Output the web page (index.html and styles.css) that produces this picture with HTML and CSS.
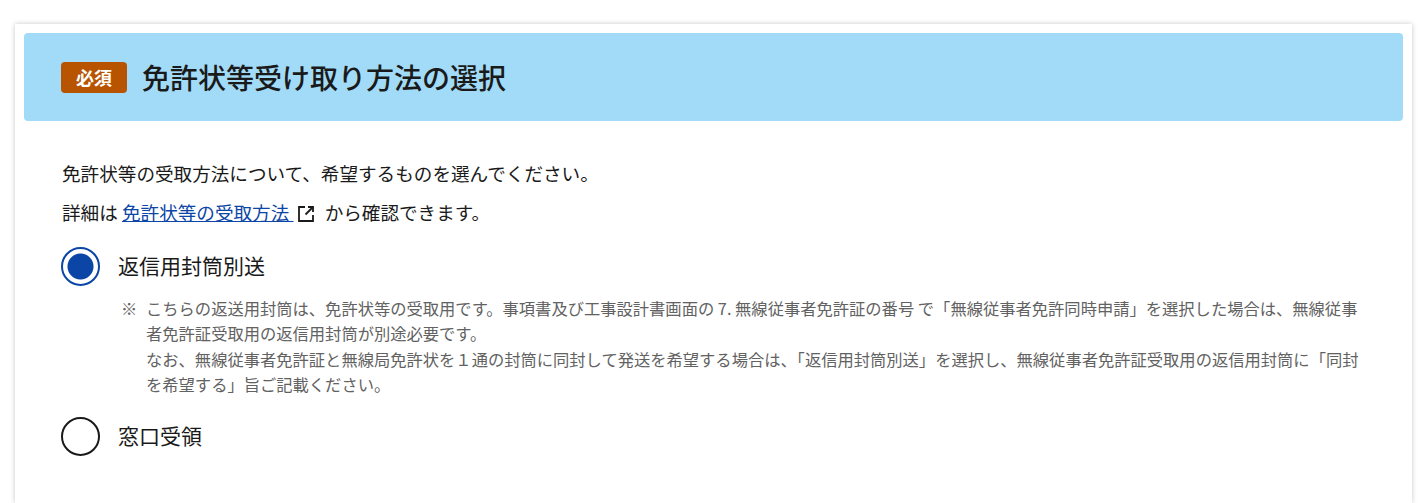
FILE: index.html
```html
<!DOCTYPE html>
<html lang="ja">
<head>
    <meta charset="UTF-8">
    <meta name="viewport" content="width=device-width, initial-scale=1.0">
    <title>免許状等受け取り方法の選択</title>
    <link rel="stylesheet" href="styles.css">
</head>
<body>
    <section class="card">
        <div class="card-header">
            <span class="badge">必須</span>
            <h2>免許状等受け取り方法の選択</h2>
        </div>
        <div class="card-body">
            <p class="lead">免許状等の受取方法について、希望するものを選んでください。</p>
            <p class="detail">詳細は <a href="#">免許状等の受取方法 </a><svg class="ext-icon" viewBox="0 0 18 18" width="18" height="18" fill="none" stroke="#1a1a1a" stroke-width="1.8"><path d="M8 2H2v14h14v-6"/><path d="M11 2h5v5"/><path d="M16 2L8.500 9.500"/></svg> から確認できます。</p>

            <label class="radio-row">
                <input type="radio" name="receive" checked>
                <span class="radio-mark"></span>
                <span class="radio-text">返信用封筒別送</span>
            </label>
            <div class="note">
                <span class="note-mark">※</span>
                <p>こちらの返送用封筒は、免許状等の受取用です。事項書及び工事設計書画面の 7. 無線従事者免許証の番号 で「無線従事者免許同時申請」を選択した場合は、無線従事者免許証受取用の返信用封筒が別途必要です。<br>なお、無線従事者免許証と無線局免許状を１通の封筒に同封して発送を希望する場合は、「返信用封筒別送」を選択し、無線従事者免許証受取用の返信用封筒に「同封を希望する」旨ご記載ください。</p>
            </div>

            <label class="radio-row">
                <input type="radio" name="receive">
                <span class="radio-mark"></span>
                <span class="radio-text">窓口受領</span>
            </label>
        </div>
    </section>
</body>
</html>
```

FILE: styles.css
```css
* {
    box-sizing: border-box;
}
html, body {
    height: 100%;
}
body {
    margin: 0;
    padding: 24px 10px 0 15px;
    overflow: hidden;
    background-color: #fff;
    color: #1a1a1a;
    font-family: "Noto Sans CJK JP", "Noto Sans", sans-serif;
}
.card {
    height: 100%;
    min-height: 479px;
    padding: 9px;
    background-color: #fff;
    box-shadow: 0 0 5px rgba(0,0,0,0.22);
}
.card-header {
    display: flex;
    align-items: center;
    height: 88px;
    padding-left: 37px;
    background-color: #a2dbf7;
    border-radius: 4px;
}
.card-header h2 {
    margin: 0;
    padding-top: 2px;
    font-size: 28px;
    line-height: 1.4;
    font-weight: 500;
    color: #1a1a1a;
}
.badge {
    width: 66px;
    height: 31px;
    margin-right: 15px;
    background-color: #b85300;
    border-radius: 4px;
    color: #fff;
    font-size: 18px;
    font-weight: 700;
    line-height: 31px;
    text-align: center;
}
.card-body {
    padding: 32px 37px 0;
}
.card-body p {
    margin: 0;
}
.lead, .detail {
    padding-left: 1px;
    font-size: 18.600px;
    line-height: 40px;
}
.card-body .detail {
    margin-top: -1px;
}
.detail a {
    color: #0b46a6;
    text-decoration: underline;
}
.ext-icon {
    vertical-align: -3px;
    margin: 0 5px 0 4px;
}
.radio-row {
    display: flex;
    align-items: center;
    height: 40px;
    font-size: 21px;
    color: #1a1a1a;
}
.radio-text {
    padding-bottom: 3px;
}
.detail + .radio-row {
    margin-top: 14px;
}
.radio-row input {
    position: absolute;
    opacity: 0;
}
.radio-mark {
    flex: none;
    width: 39px;
    height: 39px;
    margin-right: 18px;
    border: 2px solid #1a1a1a;
    border-radius: 50%;
    background-color: #fff;
}
.radio-row input:checked + .radio-mark {
    border-color: #0b46a6;
    background: radial-gradient(circle, #0b46a6 0 12.5px, #fff 13.5px);
}
.note {
    display: flex;
    margin: 10px 0 19px 60px;
    color: #626262;
    font-size: 16.300px;
    line-height: 25.330px;
}
.note-mark {
    flex: none;
    width: 25px;
}
```
